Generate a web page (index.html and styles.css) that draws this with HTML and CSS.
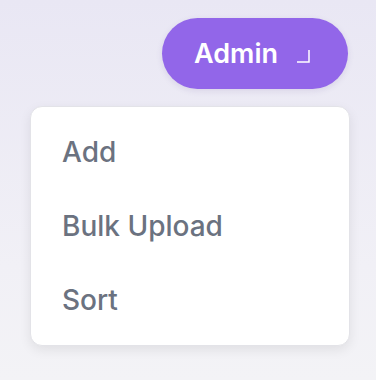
FILE: index.html
```html
<!DOCTYPE html>
<html lang="en">
<head>
    <meta charset="UTF-8">
    <meta name="viewport" content="width=device-width, initial-scale=1.0">
    <title>Admin menu</title>
    <link rel="stylesheet" href="styles.css">
</head>
<body>
    <div class="dropdown">
        <button class="admin-btn">
            <span>Admin</span>
            <svg class="corner" width="14" height="14" viewBox="0 0 14 14">
                <path d="M13 1 V13 H1" fill="none" stroke="#fff" stroke-width="1.5"/>
            </svg>
        </button>
        <ul class="menu">
            <li>Add</li>
            <li>Bulk Upload</li>
            <li>Sort</li>
        </ul>
    </div>
</body>
</html>
```

FILE: styles.css
```css
:root {
    --morado: #9266e9;
    --gris-texto: #6b7280;
}
html, body {
    height: 100%;
}
body {
    margin: 0;
    font-family: 'Inter', 'Noto Sans', sans-serif;
    background: linear-gradient(180deg, #e9e7f4 0%, #f1f0f6 70%, #f3f3f6 100%);
}
.dropdown {
    display: flex;
    flex-direction: column;
    align-items: flex-end;
    padding: 18px 26px 0 30px;
    gap: 17px;
}
.admin-btn {
    display: flex;
    align-items: center;
    gap: 18px;
    height: 71px;
    padding: 0 38px 0 32px;
    margin-right: 2px;
    border: none;
    border-radius: 36px;
    background-color: var(--morado);
    color: white;
    font-family: inherit;
    font-size: 27px;
    font-weight: 600;
    box-shadow: 0 2px 6px rgba(80, 60, 140, 0.12);
    cursor: pointer;
}
.corner {
    display: block;
    margin-top: 4px;
}
.menu {
    list-style: none;
    margin: 0;
    padding: 8px 0;
    width: 100%;
    box-sizing: border-box;
    background: white;
    border: 1px solid #e3e3e8;
    border-radius: 12px;
    box-shadow: 0 4px 12px rgba(0, 0, 0, 0.08);
}
.menu li {
    padding: 21px 31px;
    line-height: 32px;
    font-size: 28px;
    font-weight: 500;
    color: var(--gris-texto);
}
```
